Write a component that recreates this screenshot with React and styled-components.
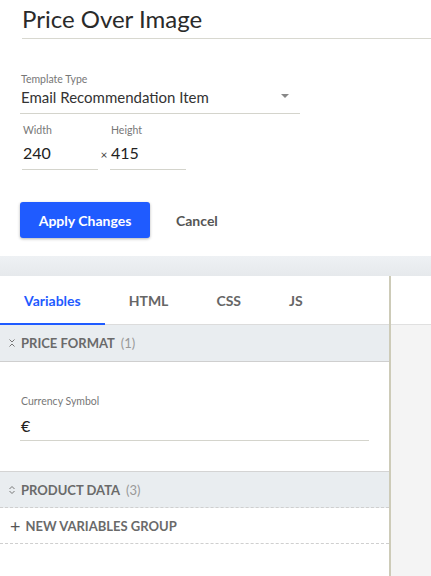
import React, { useState } from "react";
import styled, { createGlobalStyle } from "styled-components";

const GlobalStyle = createGlobalStyle`
  html, body { margin: 0; padding: 0; background: #fff; }
  body { font-family: Lato, "Open Sans", Arial, sans-serif; color: #333; }
`;

const tabs = ["Variables", "HTML", "CSS", "JS"];

function CollapseIcon({ open }) {
  // little double chevron before group titles
  return open ? (
    <svg width="8" height="10" viewBox="0 0 8 10">
      <path d="M1.5 1.5 L4 4 L6.5 1.5 M1.5 8.5 L4 6 L6.5 8.5" stroke="#777" strokeWidth="1" fill="none" />
    </svg>
  ) : (
    <svg width="8" height="10" viewBox="0 0 8 10">
      <path d="M1.5 4 L4 1.5 L6.5 4 M1.5 6 L4 8.5 L6.5 6" stroke="#777" strokeWidth="1" fill="none" />
    </svg>
  );
}

export default function App() {
  const [active, setActive] = useState(0);
  return (
    <Page>
      <GlobalStyle />
      <TopPanel>
        <Title>Price Over Image</Title>
        <Form>
          <Field width="280px">
            <Label>Template Type</Label>
            <SelectValue>
              Email Recommendation Item
              <Caret />
            </SelectValue>
          </Field>
          <SizeRow>
            <Field width="76px">
              <Label>Width</Label>
              <Value>240</Value>
            </Field>
            <Times>×</Times>
            <Field width="76px">
              <Label>Height</Label>
              <Value>415</Value>
            </Field>
          </SizeRow>
          <Actions>
            <PrimaryButton>Apply Changes</PrimaryButton>
            <TextButton>Cancel</TextButton>
          </Actions>
        </Form>
      </TopPanel>
      <Band />
      <Editor>
        <LeftPanel>
          <TabBar>
            {tabs.map((t, i) => (
              <Tab key={t} $active={i === active} onClick={() => setActive(i)}>
                {t}
              </Tab>
            ))}
          </TabBar>
          <GroupHeader>
            <CollapseIcon open />
            <GroupTitle>PRICE FORMAT</GroupTitle>
            <GroupCount>(1)</GroupCount>
          </GroupHeader>
          <GroupBody>
            <Field>
              <Label>Currency Symbol</Label>
              <Value $loose>€</Value>
            </Field>
          </GroupBody>
          <GroupHeader $top $dashed>
            <CollapseIcon />
            <GroupTitle>PRODUCT DATA</GroupTitle>
            <GroupCount>(3)</GroupCount>
          </GroupHeader>
          <NewGroup>
            <Plus>+</Plus>
            NEW VARIABLES GROUP
          </NewGroup>
        </LeftPanel>
        <RightPanel>
          <RightTop />
          <RightBody />
        </RightPanel>
      </Editor>
    </Page>
  );
}

const Page = styled.div`
  width: 431px;
  height: 576px;
  overflow: hidden;
  display: flex;
  flex-direction: column;
`;

const TopPanel = styled.div`
  height: 256px;
  padding-left: 20px;
  box-sizing: border-box;
`;

const Title = styled.h1`
  margin: 0 0 0 2px;
  padding-top: 5px;
  height: 33px;
  box-sizing: content-box;
  font-size: 24px;
  font-weight: 400;
  color: #2a2a2a;
  border-bottom: 1px solid #d8d8d0;
  line-height: 28px;
`;

const Form = styled.div`
  padding-top: 34px;
  display: flex;
  flex-direction: column;
`;

const Field = styled.div`
  width: ${(p) => p.width || "auto"};
  display: flex;
  flex-direction: column;
`;

const Label = styled.div`
  font-size: 10.5px;
  color: #777;
  line-height: 12px;
  padding-left: 1px;
`;

const Value = styled.div`
  font-size: 16px;
  color: #222;
  line-height: 20px;
  padding: ${(p) => (p.$loose ? "9px 0 4px 1px" : "7px 0 6px 1px")};
  border-bottom: 1px solid #d4d4cc;
`;

const SelectValue = styled(Value)`
  position: relative;
  font-size: 15px;
  color: #333;
  padding-top: 2px;
`;

const Caret = styled.span`
  position: absolute;
  right: 11px;
  top: 9px;
  width: 0;
  height: 0;
  border-left: 4px solid transparent;
  border-right: 4px solid transparent;
  border-top: 4px solid #888;
`;

const SizeRow = styled.div`
  display: flex;
  align-items: flex-end;
  margin-top: 10px;
  padding-left: 2px;
`;

const Times = styled.span`
  width: 12px;
  font-size: 12px;
  color: #444;
  text-align: center;
  padding-bottom: 8px;
`;

const Actions = styled.div`
  display: flex;
  align-items: center;
  margin-top: 32px;
`;

const PrimaryButton = styled.button`
  width: 130px;
  height: 36px;
  border: none;
  border-radius: 3px;
  background: #1f5bff;
  color: #fff;
  font-family: inherit;
  font-size: 14px;
  font-weight: 700;
  box-shadow: 0 1px 3px rgba(0, 0, 0, 0.3);
  cursor: pointer;
`;

const TextButton = styled.button`
  margin-left: 26px;
  border: none;
  background: none;
  padding: 0;
  font-family: inherit;
  font-size: 14px;
  font-weight: 700;
  color: #555;
  cursor: pointer;
`;

const Band = styled.div`
  height: 20px;
  background: linear-gradient(#eef1f4, #e6e9ec);
`;

const Editor = styled.div`
  flex: 1;
  display: flex;
`;

const LeftPanel = styled.div`
  width: 389px;
  border-right: 2px solid #cdcbb8;
  display: flex;
  flex-direction: column;
`;

const TabBar = styled.div`
  height: 48px;
  display: flex;
  border-bottom: 1px solid #dcdcdc;
`;

const Tab = styled.div`
  padding: 0 24px;
  display: flex;
  align-items: center;
  font-size: 14px;
  font-weight: 700;
  color: ${(p) => (p.$active ? "#1f5bff" : "#666")};
  border-bottom: 2px solid ${(p) => (p.$active ? "#1f5bff" : "transparent")};
  margin-bottom: -1px;
  padding-top: 1px;
  cursor: pointer;
`;

const GroupHeader = styled.div`
  height: 37px;
  box-sizing: border-box;
  background: #e9edf0;
  display: flex;
  align-items: center;
  padding-left: 8px;
  border-top: ${(p) => (p.$top ? "1px solid #d4d4d4" : "none")};
  border-bottom: 1px ${(p) => (p.$dashed ? "dashed" : "solid")} #cfcfcf;
`;

const GroupTitle = styled.span`
  margin-left: 5px;
  font-size: 13px;
  font-weight: 700;
  color: #6a6a6a;
`;

const GroupCount = styled.span`
  margin-left: 6px;
  font-size: 13px;
  color: #999;
`;

const GroupBody = styled.div`
  height: 109px;
  box-sizing: border-box;
  padding: 33px 20px 0 20px;
`;

const NewGroup = styled.div`
  height: 36px;
  box-sizing: border-box;
  display: flex;
  align-items: center;
  padding-left: 10px;
  font-size: 13px;
  font-weight: 700;
  color: #6a6a6a;
  border-bottom: 1px dashed #cfcfcf;
`;

const Plus = styled.span`
  font-size: 18px;
  font-weight: 400;
  color: #555;
  margin-right: 5px;
  line-height: 1;
`;

const RightPanel = styled.div`
  flex: 1;
  display: flex;
  flex-direction: column;
`;

const RightTop = styled.div`
  height: 48px;
  background: #fff;
  border-bottom: 1px solid #e0e0e0;
`;

const RightBody = styled.div`
  flex: 1;
  background: #f4f4f4;
`;
